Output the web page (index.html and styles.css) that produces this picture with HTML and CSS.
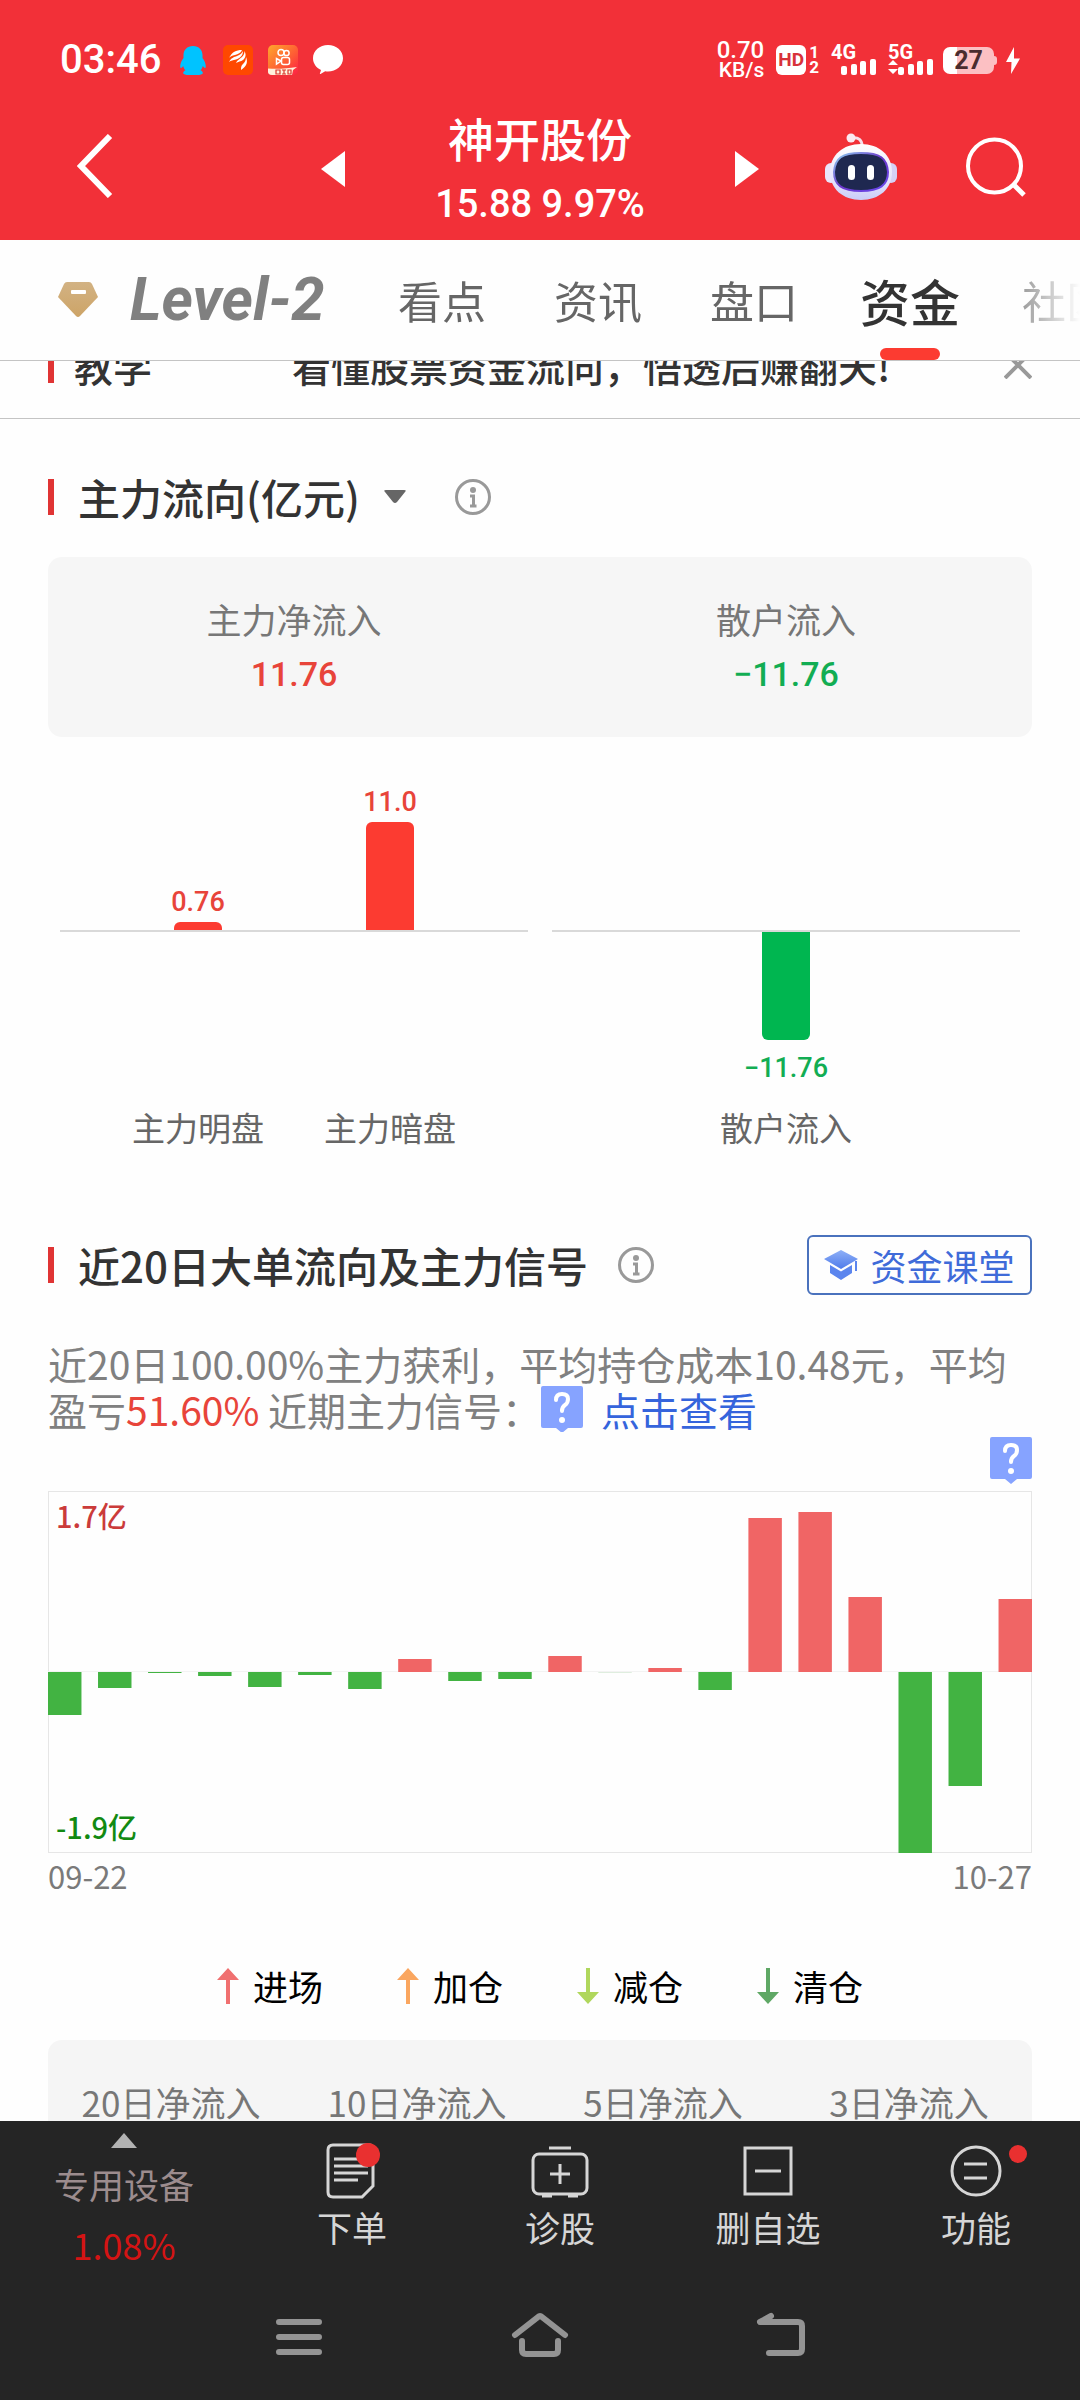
FILE: index.html
```html
<!DOCTYPE html>
<html lang="zh-CN">
<head>
<meta charset="utf-8">
<meta name="viewport" content="width=device-width, initial-scale=1">
<title>神开股份 资金</title>
<link rel="stylesheet" href="styles.css">
</head>
<body>
<div class="app">
  <header class="header">
    <div class="status">
      <div class="status-left">
        <span class="clock">03:46</span>
        <svg class="app-icon" viewBox="0 0 30 30" aria-hidden="true"><path fill="#00c3ff" d="M15 1c6 0 9.500 4 9.500 9v3c2 2.500 3.500 6 3.300 9-.3 1.600-1.600 1-3-1-.4 2-1.300 3.300-2.300 4.300 1.500.7 2.300 1.700 2.300 2.700 0 1.500-3 2-5.500 2h-8.600c-2.500 0-5.500-.5-5.500-2 0-1 .8-2 2.300-2.700-1-1-1.900-2.300-2.300-4.300-1.400 2-2.700 2.600-3 1-.2-3 1.300-6.500 3.300-9v-3c0-5 3.500-9 9.500-9z"/></svg>
        <svg class="app-icon" viewBox="0 0 30 30" aria-hidden="true"><rect width="30" height="30" rx="5" fill="#ff4800"/><g fill="#fff"><path d="M6 13C9 7 13 5 19 5c-1 3-4 4-7 5-3 .8-5 1.500-6 3z"/><path d="M6 17c2-4 5-5 8-6 3-1 5-3 6-5 0 5-3 7-7 8.500-3 .8-5 1-7 2.500z"/><path d="M13 18c1-3 4-4 6-6 2-2 2.500-4 2.500-6 2 4 1 7-1.500 9-2 1.800-5 1.500-7 3z"/><path d="M18 25c0-3 0-4 2-6 2-2 3-4 3-7 2 5 1 9-5 13z"/></g></svg>
        <svg class="app-icon" viewBox="0 0 30 30" aria-hidden="true"><defs><linearGradient id="ks" x1="0" y1="0" x2="1" y2="1"><stop offset="0" stop-color="#ffa72b"/><stop offset=".6" stop-color="#fe5a35"/><stop offset="1" stop-color="#fd1f45"/></linearGradient></defs><rect width="30" height="30" rx="5" fill="url(#ks)"/><g fill="none" stroke="#fff" stroke-width="1.500"><circle cx="13" cy="7.500" r="3"/><circle cx="18.500" cy="8" r="2.600"/><rect x="13.500" y="12.500" width="8" height="7" rx="2"/><path d="M13 16l-4.500-2.500v5.500z"/></g><path fill="#fff1dc" d="M0 23.500c8 .5 18 .4 29-1.500l-4 3-1 5H4c-3 0-4-2-4-3z"/><path stroke="#d9362b" stroke-width="1.200" fill="none" d="M8 25h4v4H8zM14 25h4M16 25v4M14 29h4M20 25h3v4h-3z"/></svg>
        <svg class="app-icon" viewBox="0 0 30 30" aria-hidden="true"><path fill="#fff" d="M15 0c8.300 0 15 5.800 15 13.200S23.300 26.500 15 26.500c-1 0-2 0-2.800-.2L7.500 29c-.5.300-.8 0-.6-.6L8 24.900C3.200 22.700 0 18.300 0 13.200 0 5.800 6.700 0 15 0z"/></svg>
      </div>
      <div class="status-right">
        <span class="speed"><b>0.70</b><small>KB/s</small></span>
        <span class="hd"><span class="hd-box">HD</span><span class="hd-sim"><i>1</i><i>2</i></span></span>
        <span class="signal"><b>4G</b><svg viewBox="0 0 46 16" aria-hidden="true"><g fill="#fff"><rect x="10" y="7" width="6" height="9" rx="2"/><rect x="20" y="5" width="6" height="11" rx="2"/><rect x="29" y="2" width="6" height="14" rx="2"/><rect x="39" y="0" width="6" height="16" rx="2"/></g></svg></span>
        <span class="signal"><b>5G</b><svg viewBox="0 0 46 16" aria-hidden="true"><g fill="#fff"><path d="M0 6l5-5 5 5zM0 10h10l-5 5z"/><rect x="10" y="8" width="6" height="8" rx="2"/><rect x="20" y="5" width="6" height="11" rx="2"/><rect x="29" y="2" width="6" height="14" rx="2"/><rect x="39" y="0" width="6" height="16" rx="2"/></g></svg></span>
        <span class="battery">27</span>
        <svg class="bolt" viewBox="0 0 14 27" aria-hidden="true"><path fill="#fff" d="M8 0L0 15h5.500L5 27l9-15.500H8z"/></svg>
      </div>
    </div>
    <div class="titlebar">
      <button class="back" aria-label="返回"><svg width="36" height="64" viewBox="0 0 36 64"><path d="M33 2L4 32l29 30" fill="none" stroke="#fff" stroke-width="6"/></svg></button>
      <div class="stock">
        <button aria-label="上一只"><svg width="24" height="36" viewBox="0 0 24 36"><path fill="#fff" d="M24 0v36L0 18z"/></svg></button>
        <div class="stock-text"><h1>神开股份</h1><p>15.88 9.97%</p></div>
        <button aria-label="下一只"><svg width="24" height="36" viewBox="0 0 24 36"><path fill="#fff" d="M0 0v36l24-18z"/></svg></button>
      </div>
      <div class="tools">
        <button aria-label="智能助手"><svg width="72" height="68" viewBox="0 0 72 68"><defs><linearGradient id="rb" x1="0" y1="0" x2="0" y2="1"><stop offset="0" stop-color="#fff"/><stop offset=".7" stop-color="#e3e0fb"/><stop offset="1" stop-color="#c9cdf8"/></linearGradient><linearGradient id="rs" x1="0" y1="0" x2="1" y2="1"><stop offset="0" stop-color="#8fd4f2"/><stop offset=".5" stop-color="#6b35c9"/><stop offset="1" stop-color="#6a4bf0"/></linearGradient></defs><path d="M26 5c8-1 11 2 11 8" fill="none" stroke="#f6dfea" stroke-width="3"/><circle cx="26" cy="5" r="4.500" fill="#fbe9f1"/><rect x="0" y="30" width="12" height="20" rx="6" fill="#e9e5fb"/><rect x="60" y="30" width="12" height="20" rx="6" fill="#d5d1f7"/><path fill="url(#rb)" d="M36 11c18 0 31 11 31 28S54 67 36 67 5 56 5 39s13-28 31-28z"/><path fill="#1f2850" stroke="url(#rs)" stroke-width="2" d="M36 20c19 0 26 5 27 19 0 13-8 19-27 19S9 52 9 39c1-14 8-19 27-19z"/><rect x="23" y="32" width="7" height="15" rx="3.500" fill="#fff"/><rect x="42" y="32" width="7" height="15" rx="3.500" fill="#fff"/></svg></button>
        <button aria-label="搜索"><svg width="60" height="60" viewBox="0 0 60 60"><circle cx="28.500" cy="29" r="26.500" fill="none" stroke="#fff" stroke-width="4"/><path d="M48 48l10 10" stroke="#fff" stroke-width="5"/></svg></button>
      </div>
    </div>
  </header>

  <nav class="tabs">
    <svg class="gem" width="40" height="36" viewBox="0 0 40 36" aria-hidden="true"><defs><linearGradient id="gm" x1="0" y1="0" x2="0" y2="1"><stop offset="0" stop-color="#d2b283"/><stop offset="1" stop-color="#cda467"/></linearGradient></defs><path fill="url(#gm)" d="M9 0h22q2 0 3 2l6 13-18 19q-2 2-4 0L0 15 6 2q1-2 3-2z"/><rect x="13" y="8" width="15" height="4" rx="1" fill="#fff"/></svg>
    <a class="level" href="#level2">Level-2</a>
    <div class="tab-list">
      <a class="tab" href="#view">看点</a>
      <a class="tab" href="#news">资讯</a>
      <a class="tab" href="#quote">盘口</a>
      <a class="tab tab-on" href="#fund" aria-current="page">资金</a>
      <a class="tab" href="#club">社区</a>
    </div>
  </nav>

  <main class="content">
    <div class="lesson">
      <span class="mark"></span>
      <strong>教学</strong>
      <p>看懂股票资金流向，悟透后赚翻天!</p>
      <button aria-label="关闭"><svg width="28" height="28" viewBox="0 0 28 28"><path d="M1 1l26 26M27 1L1 27" stroke="#999" stroke-width="4"/></svg></button>
    </div>

    <section class="flow">
      <div class="heading">
        <span class="mark"></span>
        <h2>主力流向(亿元)</h2>
        <button class="caret" aria-label="切换"><svg width="22" height="14" viewBox="0 0 22 14"><path fill="#666" d="M2 0h18q3 0 1 2L13 12q-2 2-4 0L1 2Q-1 0 2 0z"/></svg></button>
        <button class="info" aria-label="说明"><svg width="36" height="36" viewBox="0 0 36 36"><circle cx="18" cy="18" r="16.500" fill="none" stroke="#999" stroke-width="3"/><circle cx="18" cy="11" r="3" fill="#999"/><path d="M15 17h3.500v9M15 27h6.500" fill="none" stroke="#999" stroke-width="3"/></svg></button>
      </div>
      <dl class="summary">
        <div><dt>主力净流入</dt><dd class="up">11.76</dd></div>
        <div><dt>散户流入</dt><dd class="down">−11.76</dd></div>
      </dl>
      <div class="panels">
        <div class="panel">
          <div class="above">
            <div class="cell"><span class="up">0.76</span><i class="bar bar-up" style="height:8px"></i></div>
            <div class="cell"><span class="up">11.0</span><i class="bar bar-up" style="height:108px"></i></div>
          </div>
          <div class="below"></div>
          <div class="cats"><span>主力明盘</span><span>主力暗盘</span></div>
        </div>
        <div class="panel">
          <div class="above"></div>
          <div class="below"><div class="cell"><i class="bar bar-down" style="height:108px"></i><span class="down">−11.76</span></div></div>
          <div class="cats"><span>散户流入</span></div>
        </div>
      </div>
    </section>

    <section class="recent">
      <div class="heading">
        <span class="mark"></span>
        <h2>近20日大单流向及主力信号</h2>
        <button class="info" aria-label="说明"><svg width="36" height="36" viewBox="0 0 36 36"><circle cx="18" cy="18" r="16.500" fill="none" stroke="#999" stroke-width="3"/><circle cx="18" cy="11" r="3" fill="#999"/><path d="M15 17h3.500v9M15 27h6.500" fill="none" stroke="#999" stroke-width="3"/></svg></button>
        <button class="course"><svg width="34" height="30" viewBox="0 0 34 30" aria-hidden="true"><defs><linearGradient id="cp" x1="0" y1="0" x2="0" y2="1"><stop offset="0" stop-color="#8fb0f7"/><stop offset="1" stop-color="#4f7bea"/></linearGradient></defs><path fill="url(#cp)" d="M17 0l17 9-17 10L0 9z"/><path fill="#5b85ee" d="M6 15l11 6.500L28 15v8l-11 7-11-7zM31 11h2v10h-2z"/></svg>资金课堂</button>
      </div>
      <p class="brief">近20日100.00%主力获利，平均持仓成本10.48元，平均盈亏<span class="up">51.60%</span> 近期主力信号：<svg class="ask" width="42" height="46" viewBox="0 0 42 46" aria-hidden="true"><path fill="#86a3ff" d="M2 0h38q2 0 2 2v38q0 2-2 2H27l-6 5-6-5H2q-2 0-2-2V2q0-2 2-2z"/><path d="M15 14q0-6 6-6t6 5q0 4-3 6-3 2-3 6" fill="none" stroke="#fff" stroke-width="4" stroke-linecap="round"/><circle cx="21" cy="34" r="3" fill="#fff"/></svg><a href="#signal">点击查看</a></p>
      <div class="ask-row"><svg class="ask" width="42" height="48" viewBox="0 0 42 48" aria-hidden="true"><path fill="#86a3ff" d="M2 0h38q2 0 2 2v38q0 2-2 2H27l-6 5-6-5H2q-2 0-2-2V2q0-2 2-2z"/><path d="M15 14q0-6 6-6t6 5q0 4-3 6-3 2-3 6" fill="none" stroke="#fff" stroke-width="4" stroke-linecap="round"/><circle cx="21" cy="34" r="3" fill="#fff"/></svg></div>
      <div class="chart">
        <svg class="chart-bars" width="100%" height="362" aria-hidden="true">
          <g fill="#e6e6e6"><rect width="100%" height="1"/><rect y="361" width="100%" height="1"/><rect width="1" height="362"/><rect x="99.9%" width="1" height="362"/><rect y="180" width="100%" height="1" fill="#f3f3f3"/></g>
          <g fill="#42b342">
            <rect x="0%" y="181" width="3.4%" height="43"/>
            <rect x="5.084%" y="181" width="3.4%" height="16"/>
            <rect x="10.168%" y="181" width="3.4%" height="1"/>
            <rect x="15.253%" y="181" width="3.4%" height="4"/>
            <rect x="20.337%" y="181" width="3.4%" height="15"/>
            <rect x="25.421%" y="181" width="3.4%" height="3"/>
            <rect x="30.505%" y="181" width="3.4%" height="17"/>
            <rect x="40.674%" y="181" width="3.4%" height="9"/>
            <rect x="45.758%" y="181" width="3.4%" height="7"/>
            <rect x="55.926%" y="181" width="3.4%" height="1" fill="#dfeedf"/>
            <rect x="66.095%" y="181" width="3.4%" height="18"/>
            <rect x="86.432%" y="181" width="3.4%" height="181"/>
            <rect x="91.516%" y="181" width="3.4%" height="114"/>
          </g>
          <g fill="#f06565">
            <rect x="35.589%" y="168" width="3.4%" height="13"/>
            <rect x="50.842%" y="165" width="3.4%" height="16"/>
            <rect x="61.011%" y="177" width="3.4%" height="4"/>
            <rect x="71.179%" y="27" width="3.4%" height="154"/>
            <rect x="76.263%" y="21" width="3.4%" height="160"/>
            <rect x="81.347%" y="106" width="3.4%" height="75"/>
            <rect x="96.6%" y="108" width="3.4%" height="73"/>
          </g>
        </svg>
        <span class="scale-max">1.7亿</span>
        <span class="scale-min">-1.9亿</span>
      </div>
      <div class="dates"><span>09-22</span><span>10-27</span></div>
      <ul class="legend">
        <li><svg width="22" height="36" viewBox="0 0 22 36" aria-hidden="true"><path fill="#f07070" d="M11 0l11 12h-9v24H9V12H0z"/></svg>进场</li>
        <li><svg width="22" height="36" viewBox="0 0 22 36" aria-hidden="true"><path fill="#faa65f" d="M11 0l11 12h-9v24H9V12H0z"/></svg>加仓</li>
        <li><svg width="22" height="36" viewBox="0 0 22 36" aria-hidden="true"><path fill="#b0d75c" d="M11 36l11-12h-9V0H9v24H0z"/></svg>减仓</li>
        <li><svg width="22" height="36" viewBox="0 0 22 36" aria-hidden="true"><path fill="#5fa865" d="M11 36l11-12h-9V0H9v24H0z"/></svg>清仓</li>
      </ul>
      <div class="totals"><span>20日净流入</span><span>10日净流入</span><span>5日净流入</span><span>3日净流入</span></div>
    </section>
  </main>

  <footer class="footer">
    <div class="actions">
      <button class="index"><svg width="26" height="15" viewBox="0 0 26 15" aria-hidden="true"><path fill="#b3b3b3" d="M13 0l13 15H0z"/></svg><span>专用设备</span><span class="index-rate">1.08%</span></button>
      <button class="action"><svg width="58" height="56" viewBox="0 0 58 56" aria-hidden="true"><g fill="none" stroke="#d6d6d6" stroke-width="3"><path d="M10 2h36q4 0 4 4v37L39 54H10q-5 0-5-5V7q0-5 5-5z"/><path d="M11 16h26M11 23h34M11 30h34M11 37h24"/></g><circle cx="45" cy="12" r="12" fill="#e93030"/></svg>下单</button>
      <button class="action"><svg width="58" height="56" viewBox="0 0 58 56" aria-hidden="true"><g fill="none" stroke="#d6d6d6" stroke-width="3"><path d="M18 5h22"/><rect x="2" y="11" width="54" height="40" rx="6"/><path d="M19 31h20M29 21v20M11 53h10M37 53h10"/></g></svg>诊股</button>
      <button class="action"><svg width="58" height="56" viewBox="0 0 58 56" aria-hidden="true"><g fill="none" stroke="#d6d6d6" stroke-width="3"><rect x="6" y="5" width="46" height="46"/><path d="M16 28h26"/></g></svg>删自选</button>
      <button class="action"><svg width="58" height="56" viewBox="0 0 58 56" aria-hidden="true"><g fill="none" stroke="#d6d6d6" stroke-width="3"><circle cx="29" cy="28" r="24"/><path d="M17 21h23M17 35h23"/></g></svg>功能<i class="dot"></i></button>
    </div>
    <div class="system">
      <button aria-label="最近任务"><svg width="56" height="44" viewBox="0 0 56 44"><path d="M8 9h40M8 24h40M8 39h40" stroke="#949494" stroke-width="6" stroke-linecap="round"/></svg></button>
      <button aria-label="主屏幕"><svg width="58" height="46" viewBox="0 0 58 46"><path d="M4 23L27 5q2-2 4 0l23 18M11 29v9q0 4 4 4h28q4 0 4-4v-9" fill="none" stroke="#949494" stroke-width="6" stroke-linecap="round"/></svg></button>
      <button aria-label="返回上级"><svg width="56" height="46" viewBox="0 0 56 46"><path d="M18 4L7 10h38q4 0 4 4v23q0 4-4 4H16" fill="none" stroke="#949494" stroke-width="6" stroke-linecap="round" stroke-linejoin="round"/></svg></button>
    </div>
  </footer>
</div>
</body>
</html>
```
FILE: styles.css
```css
* {
  box-sizing: border-box;
}

body,
h1,
h2,
p,
dl,
dd,
ul {
  margin: 0;
  padding: 0;
}

body {
  font-family: "Noto Sans CJK SC", sans-serif;
  background: #fefefe;
  color: #333;
}

button {
  padding: 0;
  border: 0;
  background: none;
  font: inherit;
  color: inherit;
}

a {
  color: inherit;
  text-decoration: none;
}

i {
  font-style: normal;
}

svg {
  display: block;
  flex: none;
}

.app {
  display: flex;
  flex-direction: column;
  height: 100vh;
}

/* Header */
.header {
  flex: none;
  padding-bottom: 2px;
  background: #f23038;
  color: #fff;
}

.status {
  display: flex;
  align-items: center;
  justify-content: space-between;
  height: 100px;
  padding: 20px 60px 0 60px;
  font-family: Roboto, sans-serif;
}

.status-left {
  display: flex;
  align-items: center;
  gap: 15px;
}

.clock {
  font-size: 40px;
  line-height: 40px;
  font-weight: 500;
  margin-right: 2px;
}

.app-icon {
  width: 30px;
  height: 30px;
}

.status-right {
  display: flex;
  align-items: center;
  gap: 12px;
}

.speed {
  display: flex;
  flex-direction: column;
  align-items: flex-end;
}

.speed b {
  font-size: 24px;
  line-height: 20px;
  font-weight: 500;
}

.speed small {
  font-size: 21px;
  line-height: 20px;
  font-weight: 500;
}

.hd {
  display: flex;
  gap: 3px;
}

.hd-box {
  width: 30px;
  height: 30px;
  border-radius: 6px;
  background: #fff;
  color: #d8323a;
  font-size: 19px;
  line-height: 30px;
  font-weight: 700;
  text-align: center;
}

.hd-sim {
  display: flex;
  flex-direction: column;
  font-size: 17px;
  line-height: 15px;
  font-weight: 700;
}

.signal {
  width: 45px;
}

.signal b {
  display: block;
  font-size: 20px;
  line-height: 14px;
  font-weight: 700;
}

.signal svg {
  width: 46px;
  height: 16px;
}

.battery {
  position: relative;
  width: 51px;
  height: 27px;
  margin-left: -2px;
  border-radius: 7px;
  background: linear-gradient(90deg, #fff 27%, #fcc0c3 27%);
  color: #4a2c2e;
  font-size: 25px;
  line-height: 28px;
  font-weight: 700;
  text-align: center;
}

.battery::after {
  content: "";
  position: absolute;
  right: -3px;
  top: 9px;
  width: 3px;
  height: 9px;
  border-radius: 0 3px 3px 0;
  background: #fcc0c3;
}

.bolt {
  width: 14px;
  height: 27px;
}

.titlebar {
  display: grid;
  grid-template-columns: 1fr 438px 1fr;
  align-items: center;
  min-height: 138px;
}

.back {
  justify-self: start;
  padding: 0 0 6px 77px;
}

.stock {
  display: flex;
  align-items: center;
  justify-content: space-between;
}

.stock-text {
  padding-top: 2px;
  text-align: center;
}

.stock-text h1 {
  font-size: 46px;
  line-height: 68px;
  font-weight: 500;
}

.stock-text p {
  font-family: Roboto, sans-serif;
  font-size: 38px;
  line-height: 66px;
  font-weight: 500;
}

.tools {
  display: flex;
  align-items: center;
  justify-content: space-between;
  padding: 0 54px 4px 66px;
}

/* Tabs */
.tabs {
  display: flex;
  flex: none;
  align-items: center;
  height: 121px;
  padding-left: 58px;
  border-bottom: 1px solid #c4c4c4;
  overflow: hidden;
}

.level {
  width: 268px;
  margin-left: 32px;
  font-family: Roboto, sans-serif;
  font-size: 60px;
  line-height: 60px;
  font-weight: 700;
  font-style: italic;
  color: #808080;
}

.tab-list {
  display: flex;
  flex: 1;
  gap: 68px;
  min-width: 0;
  height: 100%;
  overflow: hidden;
  mask-image: linear-gradient(90deg, #000 calc(100% - 90px), transparent);
}

.tab {
  position: relative;
  display: flex;
  flex: none;
  align-items: center;
  justify-content: center;
  width: 88px;
  font-size: 44px;
  color: #666;
  white-space: nowrap;
}

.tab-on {
  font-size: 50px;
  font-weight: 500;
  color: #333;
}

.tab-on::after {
  content: "";
  position: absolute;
  left: 14px;
  bottom: 0;
  width: 60px;
  height: 12px;
  border-radius: 6px;
  background: #fc3b31;
}

/* Scrolled content */
.content {
  flex: 1;
  min-height: 0;
  overflow: hidden;
}

.mark {
  flex: none;
  width: 6px;
  height: 36px;
  background: #e03434;
}

.lesson {
  display: flex;
  align-items: center;
  height: 107px;
  margin-top: -49px;
  padding: 0 48px;
  border-bottom: 1px solid #c4c4c4;
  font-size: 39px;
  font-weight: 500;
}

.lesson strong {
  width: 218px;
  margin-left: 20px;
  font-weight: 500;
}

.lesson p {
  flex: 1;
}

.flow {
  padding: 48px 48px 0;
}

.heading {
  display: flex;
  align-items: center;
  height: 60px;
}

.heading h2 {
  margin-left: 24px;
  font-size: 42px;
  line-height: 60px;
  font-weight: 500;
}

.caret {
  margin-left: 24px;
}

.caret + .info {
  margin-left: 49px;
}

.info {
  margin-left: 30px;
}

.up {
  color: #e8443a;
}

.down {
  color: #12ad53;
}

.summary {
  display: flex;
  margin-top: 30px;
  padding: 39px 0 31px;
  border-radius: 14px;
  background: #f6f6f6;
  text-align: center;
}

.summary div {
  flex: 1;
}

.summary dt {
  font-size: 35px;
  line-height: 46px;
  color: #777;
}

.summary dd {
  font-family: Roboto, sans-serif;
  font-size: 34px;
  line-height: 64px;
  font-weight: 500;
}

.panels {
  display: flex;
  gap: 24px;
  padding: 0 12px;
}

.panel {
  flex: 1;
}

.above,
.below,
.cats {
  display: flex;
  justify-content: center;
}

.above {
  align-items: flex-end;
  height: 195px;
  border-bottom: 2px solid #d9d9d9;
}

.below {
  align-items: flex-start;
  height: 171px;
}

.cell {
  display: flex;
  flex-direction: column;
  align-items: center;
  width: 192px;
  font-family: Roboto, sans-serif;
  font-size: 27px;
  line-height: 40px;
  font-weight: 500;
}

.bar {
  width: 48px;
}

.bar-up {
  border-radius: 6px 6px 0 0;
  background: #fc3b31;
}

.bar-down {
  margin-bottom: 8px;
  border-radius: 0 0 6px 6px;
  background: #00b650;
}

.cats span {
  width: 192px;
  font-size: 33px;
  line-height: 48px;
  color: #666;
  text-align: center;
}

/* Last twenty days */
.recent {
  padding: 84px 48px 0;
}

.course {
  display: flex;
  align-items: center;
  justify-content: center;
  gap: 12px;
  width: 225px;
  height: 60px;
  margin-left: auto;
  border: 2px solid #4a72bd;
  border-radius: 6px;
  font-size: 36px;
  line-height: 54px;
  color: #3f6bd9;
}

.brief {
  margin-top: 45px;
  font-size: 39px;
  line-height: 46px;
  color: #808080;
}

.brief .ask {
  display: inline-block;
  margin-right: 18px;
  vertical-align: top;
}

.brief a {
  color: #3564dc;
}

.ask-row {
  display: flex;
  justify-content: flex-end;
  margin-top: 5px;
}

.chart {
  position: relative;
  margin-top: 6px;
  font-size: 29px;
  line-height: 36px;
  font-weight: 500;
}

.scale-max,
.scale-min {
  position: absolute;
  left: 8px;
}

.scale-max {
  top: 6px;
  color: #cb3b3a;
}

.scale-min {
  bottom: 9px;
  color: #128a12;
}

.dates {
  display: flex;
  justify-content: space-between;
  margin-top: 3px;
  font-size: 31px;
  line-height: 40px;
  color: #7a7a7a;
}

.legend {
  display: flex;
  justify-content: center;
  gap: 74px;
  margin-top: 65px;
  list-style: none;
  font-size: 35px;
  line-height: 50px;
  color: #000;
}

.legend li {
  display: flex;
  align-items: center;
  gap: 14px;
}

.totals {
  display: grid;
  grid-template-columns: repeat(4, 1fr);
  margin-top: 29px;
  padding: 38px 0 60px;
  border-radius: 14px;
  background: #f5f5f5;
  font-size: 35px;
  line-height: 48px;
  color: #777;
  text-align: center;
}

/* Bottom bars */
.footer {
  flex: none;
  background: #252525;
  color: #d6d6d6;
}

.actions {
  display: grid;
  grid-template-columns: 248fr 208fr 208fr 208fr 208fr;
  height: 149px;
  font-size: 35px;
}

.index,
.action {
  position: relative;
  display: flex;
  flex-direction: column;
  align-items: center;
  justify-content: flex-start;
}

.index {
  padding-top: 12px;
  line-height: 60px;
  color: #9c8c8e;
}

.index span {
  margin-top: 6px;
}

.index .index-rate {
  margin-top: 0;
  font-size: 36px;
  color: #d41414;
}

.action {
  padding-top: 22px;
  line-height: 56px;
}

.dot {
  position: absolute;
  top: 24px;
  left: calc(50% + 33px);
  width: 18px;
  height: 18px;
  border-radius: 50%;
  background: #e93030;
}

.system {
  display: flex;
  align-items: center;
  justify-content: center;
  gap: 184px;
  height: 130px;
}
```
